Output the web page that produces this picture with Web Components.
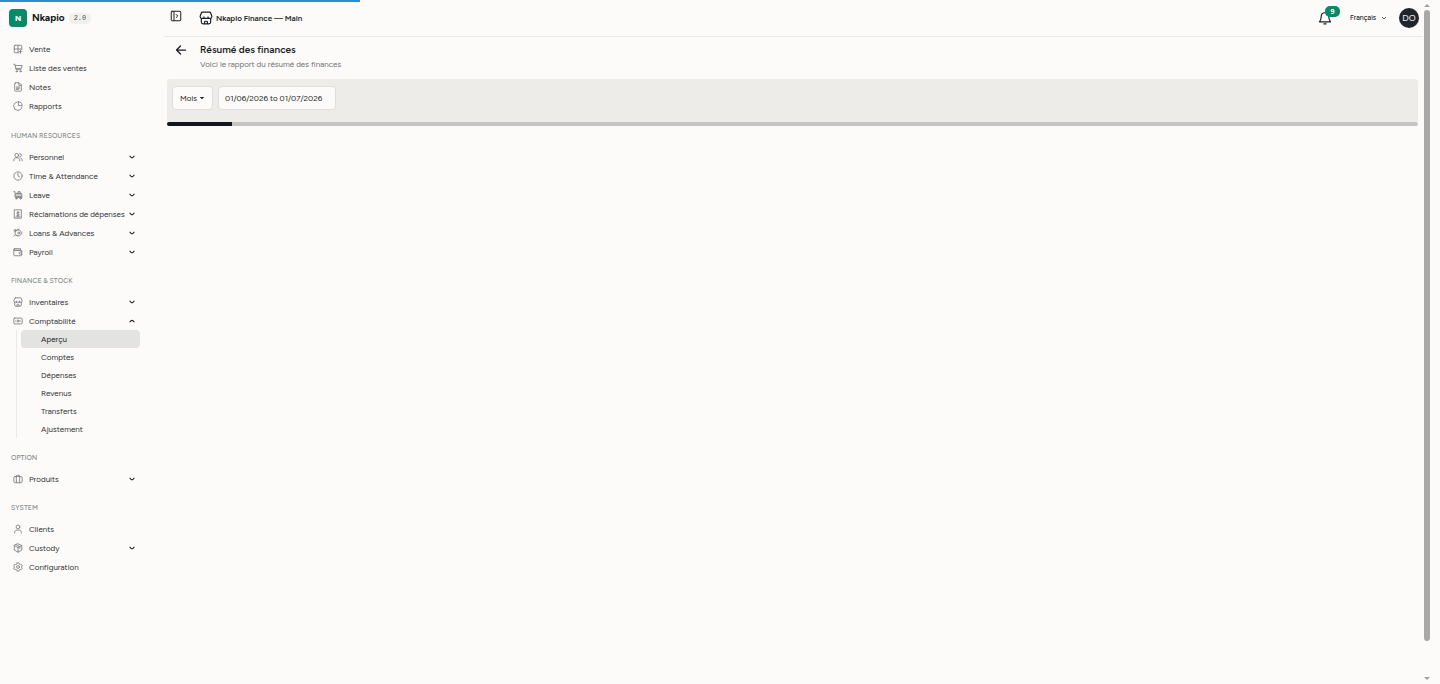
<!DOCTYPE html>
<html lang="fr">
<head>
<meta charset="utf-8">
<title>Nkapio – Résumé des finances</title>
<style>
  :root {
    --font: Figtree, Inter, "Liberation Sans", sans-serif;
    --bg: #fcfbf9;
    --ink: #1b1e23;
    --text: #2f3237;
    --muted: #6f7276;
    --line: #ebeae7;
    --green: #078a66;
    --blue: #2490d0;
  }
  body { margin: 0; background: var(--bg); color: var(--text); font: 8px/12px var(--font); overflow: hidden; }
</style>
</head>
<body>
<nk-app>
  <nk-sidebar slot="sidebar">
    <nk-section>
      <nk-item icon="grid">Vente</nk-item>
      <nk-item icon="cart">Liste des ventes</nk-item>
      <nk-item icon="note">Notes</nk-item>
      <nk-item icon="pie">Rapports</nk-item>
    </nk-section>
    <nk-section heading="HUMAN RESOURCES">
      <nk-item icon="users" group>Personnel</nk-item>
      <nk-item icon="clock" group>Time &amp; Attendance</nk-item>
      <nk-item icon="luggage" group>Leave</nk-item>
      <nk-item icon="receipt" group>Réclamations de dépenses</nk-item>
      <nk-item icon="coins" group>Loans &amp; Advances</nk-item>
      <nk-item icon="wallet" group>Payroll</nk-item>
    </nk-section>
    <nk-section heading="FINANCE &amp; STOCK">
      <nk-item icon="store" group>Inventaires</nk-item>
      <nk-item icon="cash" group open>Comptabilité
        <nk-subitem slot="sub" current>Aperçu</nk-subitem>
        <nk-subitem slot="sub">Comptes</nk-subitem>
        <nk-subitem slot="sub">Dépenses</nk-subitem>
        <nk-subitem slot="sub">Revenus</nk-subitem>
        <nk-subitem slot="sub">Transferts</nk-subitem>
        <nk-subitem slot="sub">Ajustement</nk-subitem>
      </nk-item>
    </nk-section>
    <nk-section heading="OPTION">
      <nk-item icon="case" group>Produits</nk-item>
    </nk-section>
    <nk-section heading="SYSTEM">
      <nk-item icon="user">Clients</nk-item>
      <nk-item icon="box" group>Custody</nk-item>
      <nk-item icon="gear">Configuration</nk-item>
    </nk-section>
  </nk-sidebar>
  <nk-topbar slot="main">Nkapio Finance — Main</nk-topbar>
  <nk-page-title slot="main">Résumé des finances<span slot="sub">Voici le rapport du résumé des finances</span></nk-page-title>
  <nk-filters slot="main"></nk-filters>
</nk-app>

<script>
const ICONS = {
  grid: '<path d="M5 3h14a2 2 0 0 1 2 2v8M3 5a2 2 0 0 1 2-2M3 5v14a2 2 0 0 0 2 2h8M12 3v18M3 12h18M18 15v7M14.500 18.500h7"/>',
  cart: '<path d="M2 3h2.500l3 13h11.500M5.500 6H22l-2.200 7H7"/><circle cx="9" cy="20" r="1.500"/><circle cx="18" cy="20" r="1.500"/>',
  note: '<path d="M6 2h9l5 5v13a2 2 0 0 1-2 2H6a2 2 0 0 1-2-2V4a2 2 0 0 1 2-2zM14 2v6h6M8 12h8M8 15h8M8 18h5"/>',
  pie: '<path d="M21.500 14A10 10 0 1 1 10 2.500M13 2v9h9a9 9 0 0 0-9-9z"/>',
  users: '<circle cx="9" cy="8" r="4.500"/><path d="M2 21v-2c0-3 2-5 5-5h4c3 0 5 2 5 5v2M16 4a4 4 0 0 1 0 8M19 15c2 .6 3 2 3 4v2"/>',
  user: '<circle cx="12" cy="7" r="4.500"/><path d="M4 22v-2c0-3 2-5.500 5.500-5.500h5c3.500 0 5.500 2.500 5.500 5.500v2"/>',
  clock: '<circle cx="12" cy="12" r="10"/><path d="M12 5v7l4 2.500"/>',
  luggage: '<path d="M2 4h3v13h17M8 8h13v9H8zM12 8V4h5v4M12 8v9M17 8v9"/><circle cx="8" cy="20" r="1.800"/><circle cx="18" cy="20" r="1.800"/>',
  receipt: '<path d="M4 2h16v20H4zM15 8h-4a2 2 0 0 0 0 4h2a2 2 0 0 1 0 4H9M12 6v12M7 19h10"/>',
  coins: '<circle cx="5" cy="6" r="2.500"/><path d="M9 5l7 0 6 7-6 7-8-1-3-5zM2 19c3-3 5-3 8 0M11 3h3"/><circle cx="14" cy="12" r="2.500"/>',
  wallet: '<path d="M4 4h14v4H4a2 2 0 0 1 0-4zM2 6v13a2 2 0 0 0 2 2h15a2 2 0 0 0 2-2V8H4M21 12h-4a2 2 0 0 0 0 5h4"/>',
  store: '<path d="M6 2h12a2 2 0 0 1 2 1.500L22 9v1a2.500 2.500 0 0 1-2.500 2.500h-15A2.500 2.500 0 0 1 2 10V9l2-5.500A2 2 0 0 1 6 2zM8.500 10v2.500M15.500 10v2.500M4 13v6a3 3 0 0 0 3 3h10a3 3 0 0 0 3-3v-6M9.500 22v-3a1.500 1.500 0 0 1 1.500-1.500h2a1.500 1.500 0 0 1 1.500 1.500v3"/>',
  cash: '<rect x="2" y="5" width="20" height="14" rx="2"/><circle cx="12" cy="12" r="2.500"/><path d="M6 12h.1M18 12h.1"/>',
  case: '<rect x="2" y="6" width="20" height="15" rx="3"/><path d="M8 21V5a2 2 0 0 1 2-2h4a2 2 0 0 1 2 2v16"/>',
  box: '<path d="M12 2l9 4v11l-9 5-9-5V6zM3 6l9 5 9-5M12 11v11M7.500 4l9 5v4"/>',
  gear: '<path d="M10 2h4l1 3 2.500 1.500 3-1 2 3.500-2.500 3 2.500 3-2 3.500-3-1L15 19l-1 3h-4l-1-3-2.500-1.500-3 1L1.500 15 4 12 1.500 9l2-3.500 3 1L9 5z"/><circle cx="12" cy="12" r="3.500"/>',
  down: '<path d="M4 9c2 3 6 6 8 6s6-3 8-6"/>',
  up: '<path d="M4 15c2-3 6-6 8-6s6 3 8 6"/>',
  chevron: '<path d="M5 9l7 7 7-7"/>',
  caret: '<path d="M3 8h18l-9 9z" fill="currentColor" stroke="none"/>',
  panel: '<rect x="2.500" y="2.500" width="19" height="19" rx="1.500"/><path d="M8 3v18M12.500 9l3 3-3 3"/>',
  back: '<path d="M21 12H3M11 4l-8 8 8 8"/>',
  bell: '<path d="M12 3c-4 0-6.500 3-6.500 6.500 0 5-1.500 6-3 9h19c-1.500-3-3-4-3-9C18.500 6 16 3 12 3zM10 22h4"/>'
};

const define = (name, css, html, setup) => {
  const template = document.createElement('template');
  template.innerHTML = `<style>:host,*{box-sizing:border-box}${css}</style>${html}`;
  customElements.define(name, class extends HTMLElement {
    constructor() {
      super();
      this.attachShadow({ mode: 'open' }).append(template.content.cloneNode(true));
    }
    connectedCallback() { if (setup) setup(this, this.shadowRoot); }
  });
};

define('nk-icon', `
  :host { display: block; flex: none; width: var(--size, 10px); height: var(--size, 10px); }
  svg { display: block; width: 100%; height: 100%; fill: none; stroke: currentColor; stroke-width: var(--stroke, 2); stroke-linecap: round; stroke-linejoin: round; }
`, '<svg viewBox="0 0 24 24" aria-hidden="true"></svg>', (el, root) => {
  root.querySelector('svg').innerHTML = ICONS[el.getAttribute('name')] || '';
});

define('nk-subitem', `
  :host { display: block; }
  a { display: block; height: 18px; padding-left: 20px; border-radius: 4px; line-height: 18px; color: var(--text); text-decoration: none; }
  :host([current]) a { background: #e3e3e2; color: var(--ink); }
`, '<a href="#"><slot></slot></a>');

define('nk-item', `
  :host { display: block; }
  .row { display: flex; align-items: center; gap: 6px; width: 100%; height: 19px; padding: 0 5px 0 8px; border: 0; background: none; font: inherit; color: inherit; text-align: left; text-decoration: none; white-space: nowrap; }
  .label { flex: 1; min-width: 0; }
  .icon { color: #77797c; }
  .mark { --size: 6px; --stroke: 5; color: var(--ink); }
  .subs { margin-left: 11px; padding-left: 4px; border-left: 1px solid var(--line); }
`, '', (el, root) => {
  const group = el.hasAttribute('group'), open = el.hasAttribute('open');
  const tag = group ? 'button' : 'a';
  const attrs = group ? `type="button" aria-expanded="${open}"` : 'href="#"';
  const mark = group ? `<nk-icon class="mark" name="${open ? 'up' : 'down'}"></nk-icon>` : '';
  root.innerHTML += `<${tag} class="row" ${attrs}><nk-icon class="icon" name="${el.getAttribute('icon')}"></nk-icon><span class="label"><slot></slot></span>${mark}</${tag}>`
    + (open ? '<div class="subs"><slot name="sub"></slot></div>' : '');
});

define('nk-section', `
  :host { display: block; }
  :host(:first-child) { padding-bottom: 1px; }
  h2 { margin: 13px 0 4px 6px; font-size: 7px; line-height: 14px; font-weight: 500; color: #8a8c8f; }
  h2:empty { display: none; }
`, '<h2></h2><slot></slot>', (el, root) => {
  root.querySelector('h2').textContent = el.getAttribute('heading') || '';
});

define('nk-sidebar', `
  :host { display: block; padding: 9px 0 16px 5px; }
  header { display: flex; align-items: center; gap: 4px; height: 18px; margin: 0 0 12px 4px; }
  .logo { display: grid; place-items: center; width: 18px; height: 18px; margin-right: 1px; border-radius: 4px; background: var(--green); color: #fff; font-weight: 800; font-size: 8px; }
  .name { font-size: 10px; font-weight: 700; color: #15171a; }
  .version { padding: 0 5px; border-radius: 6px; background: #f0f0ee; font: 7px/11px "Liberation Mono", monospace; color: #505357; }
`, '<header><span class="logo">N</span><span class="name">Nkapio</span><span class="version">2.0</span></header><nav aria-label="Menu"><slot></slot></nav>');

define('nk-topbar', `
  :host { display: flex; align-items: center; height: 37px; padding: 0 4px 1px 6px; border-bottom: 1px solid var(--line); color: var(--ink); }
  button { display: block; padding: 0; border: 0; background: none; color: inherit; }
  .panel { --size: 12px; --stroke: 2; margin: 0 17px 3px 0; }
  .store { --size: 14px; --stroke: 2; margin-right: 3px; }
  .name { flex: 1; font-weight: 600; white-space: nowrap; }
  .bell { position: relative; --size: 14px; --stroke: 2; margin-right: 18px; }
  .badge { position: absolute; left: 7px; top: -5px; width: 15px; height: 11px; border-radius: 5px; background: var(--green); color: #fff; font: 700 7px/11px var(--font); text-align: center; }
  label { display: flex; align-items: center; gap: 3px; margin-right: 12px; --size: 6px; --stroke: 3; }
  select { appearance: none; width: 28px; padding: 0; border: 0; background: none; font: 500 7px/12px var(--font); color: inherit; }
  .avatar { display: grid; place-items: center; width: 20px; height: 20px; border-radius: 50%; background: #20242b; color: #e8e9ea; font-size: 9px; }
`, `
  <button class="panel" type="button" aria-label="Menu"><nk-icon name="panel"></nk-icon></button>
  <nk-icon class="store" name="store"></nk-icon>
  <span class="name"><slot></slot></span>
  <button class="bell" type="button" aria-label="Notifications"><nk-icon name="bell"></nk-icon><span class="badge">9</span></button>
  <label><select aria-label="Langue"><option>Français</option></select><nk-icon name="chevron"></nk-icon></label>
  <button class="avatar" type="button">DO</button>
`);

define('nk-page-title', `
  :host { display: flex; align-items: flex-start; gap: 13px; padding: 5px 0 8px 11px; }
  a { --size: 12px; --stroke: 2.5; margin-top: 2px; color: var(--ink); }
  h1 { margin: 0; font-size: 10px; line-height: 16px; font-weight: 600; color: var(--ink); }
  p { margin: 0; line-height: 13px; color: var(--muted); }
`, '<a href="#" aria-label="Retour"><nk-icon name="back"></nk-icon></a><div><h1><slot></slot></h1><p><slot name="sub"></slot></p></div>');

define('nk-filters', `
  :host { display: block; margin: 0 5px 0 3px; }
  form { display: flex; gap: 5px; padding: 7px 5px 12px; border-radius: 3px 3px 0 0; background: #edece8; }
  button, input { height: 24px; border: 1px solid #dfdeda; border-radius: 4px; background: var(--bg); font: 8px/12px var(--font); color: var(--ink); }
  button { display: flex; align-items: center; justify-content: center; gap: 2px; width: 41px; padding: 0; --size: 6px; }
  input { width: 118px; padding: 0 6px; }
  .track { height: 4px; border-radius: 2px; background: #c5c5c4; overflow: hidden; }
  .fill { width: 5.2%; height: 100%; background: #111522; }
`, `
  <form><button type="button">Mois <nk-icon name="caret"></nk-icon></button><input type="text" aria-label="Période" value="01/06/2026 to 01/07/2026"></form>
  <div class="track" role="progressbar" aria-label="Chargement"><div class="fill"></div></div>
`);

define('nk-scrollbar', `
  :host { display: flex; flex-direction: column; align-items: center; padding: 4px 0; color: #a0a0a0; }
  .up, .down { width: 0; height: 0; border: 3px solid transparent; }
  .up { border-top: 0; border-bottom-color: currentColor; }
  .down { border-bottom: 0; border-top-color: currentColor; }
  .rail { flex: 1; align-self: stretch; padding: 3px 0; }
  .thumb { height: 95%; border-radius: 3px; background: #a9a9a8; }
`, '<div class="up"></div><div class="rail"><div class="thumb"></div></div><div class="down"></div>');

define('nk-app', `
  :host { display: grid; grid-template-columns: 140px minmax(0, 1fr) 6px; min-height: 100vh; padding-right: 10px; }
  .loading { position: absolute; top: 0; left: 0; width: 25%; height: 2px; background: var(--blue); }
  main { margin-left: 24px; padding-right: 1px; }
`, '<div class="loading"></div><slot name="sidebar"></slot><main><slot name="main"></slot></main><nk-scrollbar aria-hidden="true"></nk-scrollbar>');
</script>
</body>
</html>
